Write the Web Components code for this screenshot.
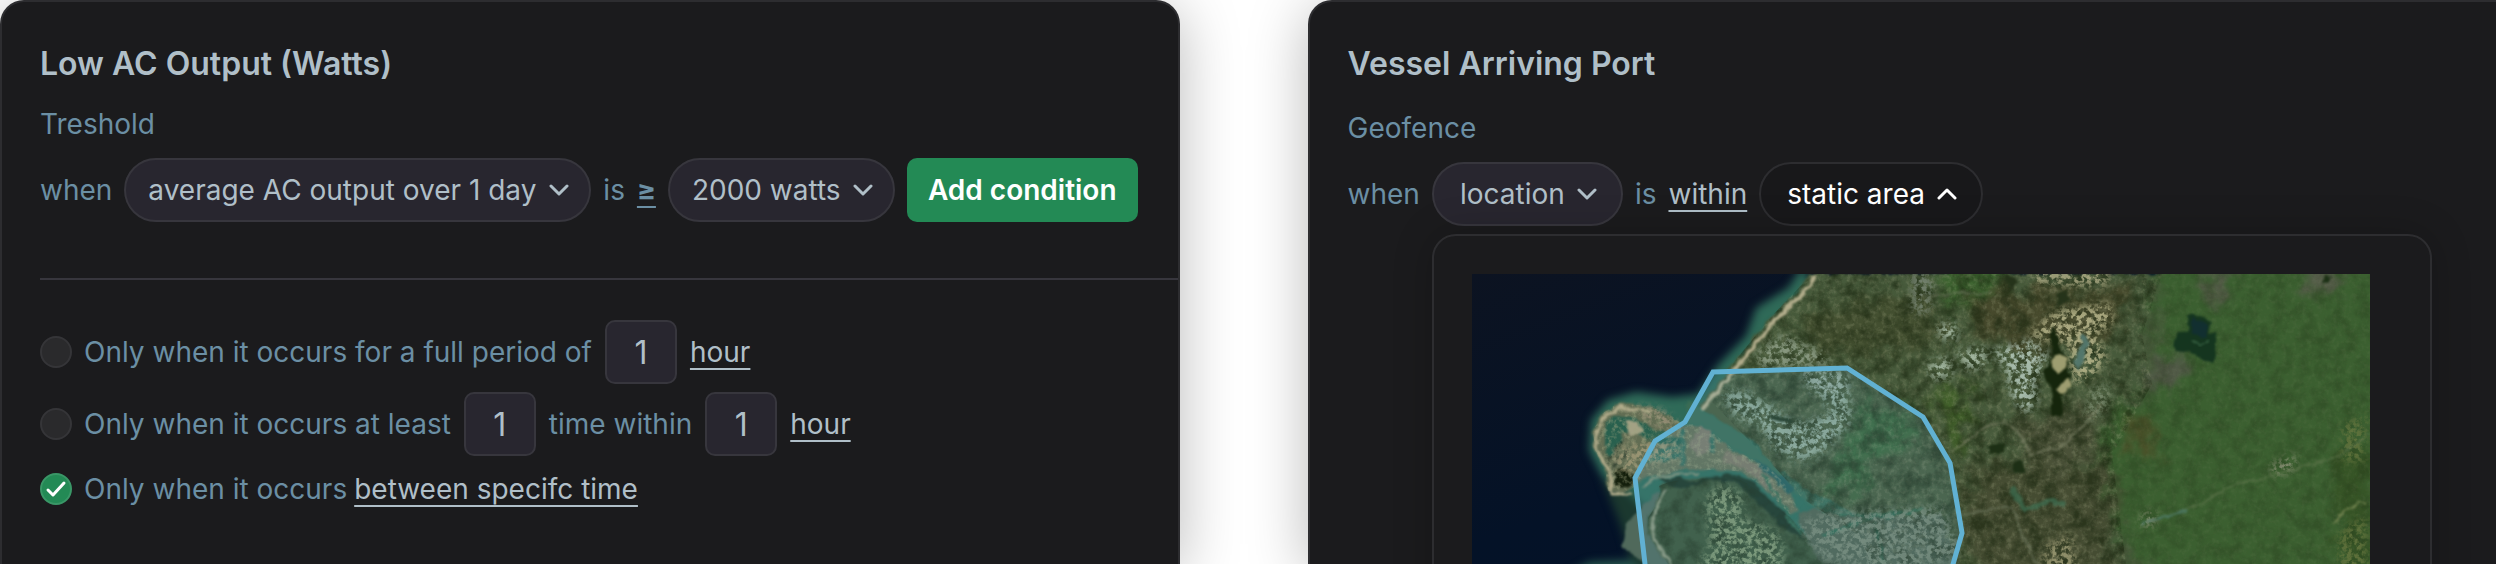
<!DOCTYPE html>
<html lang="en">
<head>
<meta charset="utf-8">
<meta name="viewport" content="width=device-width, initial-scale=1">
<title>Alert rules</title>
<style>
  :root {
    --surface: #1b1b1d;
    --surface-edge: #2d2d30;
    --field: #28262f;
    --field-edge: #37363d;
    --text: #b0bfc8;
    --text-muted: #6b8fa4;
    --accent: #238a55;
  }
  body {
    margin: 0;
    background: #fff;
    color: var(--text-muted);
    font: 28px/40px Inter, "Liberation Sans", sans-serif;
  }
  main {
    display: flex;
    gap: 128px;
    height: 100vh;
    overflow: hidden;
  }
  /* the second card runs on past the edge of the window */
  main rule-card:last-child {
    flex: 1;
    margin-right: -24px;
  }
</style>
</head>
<body>
<main>
  <rule-card heading="Low AC Output (Watts)" kind="Treshold">
    <condition-row>
      <span slot="lead">when</span>
      <pill-select label="Metric" value="average AC output over 1 day"></pill-select>
      <span>is</span>
      <inline-link tone="muted">≥</inline-link>
      <pill-select label="Value" value="2000 watts"></pill-select>
      <action-button>Add condition</action-button>
    </condition-row>
    <rule-divider></rule-divider>
    <occurrence-list></occurrence-list>
  </rule-card>
  <rule-card heading="Vessel Arriving Port" kind="Geofence" roomy>
    <condition-row>
      <span slot="lead">when</span>
      <pill-select label="Property" value="location" wide></pill-select>
      <span>is</span>
      <inline-link>within</inline-link>
      <pill-toggle>static area</pill-toggle>
      <map-popover slot="panel"><geofence-map></geofence-map></map-popover>
    </condition-row>
  </rule-card>
</main>

<script>
class RuleCard extends HTMLElement {
  constructor() {
    super();
    this.attachShadow({ mode: "open" });
  }

  connectedCallback() {
    this.shadowRoot.innerHTML = `
      <style>
        :host {
          display: block;
          box-sizing: border-box;
          padding: 42px 40px 0 38px;
          background: var(--surface);
          border: 2px solid var(--surface-edge);
          border-bottom: 0;
          border-radius: 24px 24px 0 0;
          box-shadow: 0 8px 60px rgba(0, 0, 0, 0.28);
        }
        h2 {
          margin: 0 0 20px;
          color: var(--text);
          font-size: 32px;
          font-weight: 600;
          line-height: 40px;
        }
        p { margin: 0 0 14px; }
        :host([roomy]) h2 { margin-bottom: 24px; }
      </style>
      <h2>${this.getAttribute("heading")}</h2>
      <p>${this.getAttribute("kind")}</p>
      <slot></slot>
    `;
  }
}

class ConditionRow extends HTMLElement {
  constructor() {
    super();
    this.attachShadow({ mode: "open" });
    this.shadowRoot.innerHTML = `
      <style>
        :host {
          display: grid;
          grid-template-columns: max-content 1fr;
          column-gap: 12px;
          align-items: center;
          white-space: nowrap;
        }
        .parts {
          display: flex;
          align-items: center;
          gap: 12px;
        }
        slot[name="panel"] {
          display: block;
          grid-column: 2;
        }
      </style>
      <slot name="lead"></slot>
      <div class="parts"><slot></slot></div>
      <slot name="panel"></slot>
    `;
  }
}

class PillSelect extends HTMLElement {
  constructor() {
    super();
    this.attachShadow({ mode: "open" });
  }

  connectedCallback() {
    const value = this.getAttribute("value");
    this.shadowRoot.innerHTML = `
      <style>
        :host {
          display: grid;
          align-items: center;
          --pad: 22px;
        }
        :host([wide]) { --pad: 26px; }
        select, svg { grid-area: 1 / 1; }
        select {
          appearance: none;
          box-sizing: border-box;
          height: 64px;
          margin: 0;
          padding: 0 calc(var(--pad) + 30px) 0 var(--pad);
          color: var(--text);
          background: var(--field);
          border: 2px solid var(--field-edge);
          border-radius: 32px;
          font: inherit;
        }
        svg {
          justify-self: end;
          width: 20px;
          height: 12px;
          margin-right: var(--pad);
          fill: none;
          stroke: var(--text);
          stroke-width: 3;
          pointer-events: none;
        }
      </style>
      <select aria-label="${this.getAttribute("label")}"><option>${value}</option></select>
      <svg viewBox="0 0 20 12"><path d="M2 2l8 8 8-8" stroke-linecap="round" stroke-linejoin="round"/></svg>
    `;
  }
}

class PillToggle extends HTMLElement {
  constructor() {
    super();
    this.attachShadow({ mode: "open" });
    this.shadowRoot.innerHTML = `
      <style>
        :host { display: block; }
        button {
          display: flex;
          align-items: center;
          gap: 12px;
          box-sizing: border-box;
          height: 64px;
          padding: 0 24px 0 26px;
          color: #fff;
          background: #18181a;
          border: 2px solid var(--surface-edge);
          border-radius: 32px;
          font: inherit;
        }
        svg { width: 20px; height: 12px; fill: none; stroke: #fff; stroke-width: 3; }
      </style>
      <button type="button" aria-expanded="true">
        <slot></slot>
        <svg viewBox="0 0 20 12"><path d="M2 10l8-8 8 8" stroke-linecap="round" stroke-linejoin="round"/></svg>
      </button>
    `;
  }
}

class InlineLink extends HTMLElement {
  constructor() {
    super();
    this.attachShadow({ mode: "open" });
    this.shadowRoot.innerHTML = `
      <style>
        :host { display: inline; }
        a {
          color: var(--text);
          text-decoration: underline 2px;
          text-underline-offset: 6px;
          text-decoration-skip-ink: none;
        }
        :host([tone="muted"]) a {
          color: var(--text-muted);
          font-weight: 700;
        }
      </style>
      <a href="#"><slot></slot></a>
    `;
  }
}

class ActionButton extends HTMLElement {
  constructor() {
    super();
    this.attachShadow({ mode: "open" });
    this.shadowRoot.innerHTML = `
      <style>
        :host { display: block; }
        button {
          height: 64px;
          padding: 0 21px;
          color: #fff;
          background: var(--accent);
          border: 0;
          border-radius: 10px;
          font: inherit;
          font-weight: 600;
        }
      </style>
      <button type="button"><slot></slot></button>
    `;
  }
}

class RuleDivider extends HTMLElement {
  constructor() {
    super();
    this.attachShadow({ mode: "open" });
    this.shadowRoot.innerHTML = `
      <style>
        :host {
          display: block;
          margin: 56px -40px 40px 0;
        }
        hr {
          margin: 0;
          border: 0;
          border-top: 2px solid var(--field-edge);
        }
      </style>
      <hr>
    `;
  }
}

class OccurrenceList extends HTMLElement {
  constructor() {
    super();
    this.attachShadow({ mode: "open" });
    this.shadowRoot.innerHTML = `
      <style>
        :host {
          display: flex;
          flex-direction: column;
          gap: 8px;
          white-space: nowrap;
        }
        .row {
          display: flex;
          align-items: center;
          gap: 13px;
          min-height: 50px;
        }
        .choice {
          display: grid;
          grid-template-columns: 32px max-content;
          align-items: center;
          column-gap: 12px;
        }
        .choice svg {
          grid-area: 1 / 1;
          width: 32px;
          height: 32px;
          fill: none;
          stroke: #fff;
          stroke-width: 3;
          pointer-events: none;
        }
        input[type="radio"] {
          grid-area: 1 / 1;
          appearance: none;
          box-sizing: border-box;
          width: 32px;
          height: 32px;
          margin: 0;
          background: #2a2a2c;
          border: 2px solid #353538;
          border-radius: 50%;
        }
        input[type="radio"]:checked {
          background: var(--accent);
          border-color: #3a9767;
        }
        input[type="text"] {
          box-sizing: border-box;
          width: 72px;
          height: 64px;
          padding: 0;
          color: var(--text);
          background: var(--field);
          border: 2px solid var(--field-edge);
          border-radius: 10px;
          font: inherit;
          font-size: 32px;
          text-align: center;
        }
        .tight { gap: 7px; }
      </style>
      <div class="row">
        <div class="choice">
          <input type="radio" name="when" id="full">
          <label for="full">Only when it occurs for a full period of</label>
        </div>
        <input type="text" inputmode="numeric" aria-label="Period" value="1">
        <inline-link>hour</inline-link>
      </div>
      <div class="row">
        <div class="choice">
          <input type="radio" name="when" id="least">
          <label for="least">Only when it occurs at least</label>
        </div>
        <input type="text" inputmode="numeric" aria-label="Times" value="1">
        <span>time within</span>
        <input type="text" inputmode="numeric" aria-label="Window" value="1">
        <inline-link>hour</inline-link>
      </div>
      <div class="row tight">
        <div class="choice">
          <input type="radio" name="when" id="between" checked>
          <svg viewBox="0 0 32 32"><path d="M8 17l5 5 11-12" stroke-linecap="round" stroke-linejoin="round"/></svg>
          <label for="between">Only when it occurs</label>
        </div>
        <inline-link>between specifc time</inline-link>
      </div>
    `;
  }
}

class MapPopover extends HTMLElement {
  constructor() {
    super();
    this.attachShadow({ mode: "open" });
    this.shadowRoot.innerHTML = `
      <style>
        :host {
          display: block;
          margin: 8px 46px 0 0;
          padding: 38px 60px 38px 38px;
          border: 2px solid var(--surface-edge);
          border-radius: 24px;
          background: var(--surface);
          box-shadow: 0 0 40px rgba(0, 0, 0, 0.2);
        }
      </style>
      <slot></slot>
    `;
  }
}

class GeofenceMap extends HTMLElement {
  constructor() {
    super();
    this.attachShadow({ mode: "open" });
    this.shadowRoot.innerHTML = `
      <style>
        :host { display: block; }
        svg { display: block; width: 100%; height: auto; }
        filter { color-interpolation-filters: sRGB; }
      </style>
      <svg viewBox="0 0 898 340" role="img" aria-label="Satellite map with the geofence area">
        <defs>
          <linearGradient id="sea" x1="0" y1="0" x2="1" y2="1">
            <stop offset="0" stop-color="#0c1321"/>
            <stop offset=".4" stop-color="#041227"/>
            <stop offset="1" stop-color="#02122b"/>
          </linearGradient>
          <filter id="haze" x="-20%" y="-20%" width="140%" height="140%"><feGaussianBlur stdDeviation="4"/></filter>
          <!-- ragged edges -->
          <filter id="rough" x="-10%" y="-10%" width="120%" height="120%">
            <feTurbulence type="fractalNoise" baseFrequency=".09" numOctaves="3" seed="4"/>
            <feDisplacementMap in="SourceGraphic" scale="8" xChannelSelector="R" yChannelSelector="G"/>
            <feGaussianBlur stdDeviation="1"/>
          </filter>
          <filter id="patch" x="-20%" y="-20%" width="140%" height="140%">
            <feGaussianBlur stdDeviation="6" result="b"/>
            <feTurbulence type="fractalNoise" baseFrequency=".05" numOctaves="5" seed="9"/>
            <feDisplacementMap in="b" scale="40" xChannelSelector="R" yChannelSelector="G"/>
            <feGaussianBlur stdDeviation="1"/>
          </filter>
          <!-- roofs and greenhouses -->
          <filter id="speckle" x="-10%" y="-10%" width="120%" height="120%">
            <feGaussianBlur in="SourceGraphic" stdDeviation="4" result="b"/>
            <feTurbulence type="fractalNoise" baseFrequency=".2" numOctaves="3" seed="21"/>
            <feColorMatrix values="0 0 0 0 1  0 0 0 0 1  0 0 0 0 1  0 5 0 0 -2.1" result="n"/>
            <feComposite in="b" in2="n" operator="in"/>
            <feGaussianBlur stdDeviation=".7"/>
          </filter>
          <!-- ground texture -->
          <filter id="light" x="0" y="0" width="100%" height="100%">
            <feTurbulence type="fractalNoise" baseFrequency=".2" numOctaves="3" seed="3"/>
            <feColorMatrix values="0 0 0 0 .62  0 0 0 0 .64  0 0 0 0 .5  3 0 0 0 -1.35"/>
            <feGaussianBlur stdDeviation=".7" result="n"/>
            <feComposite in="n" in2="SourceGraphic" operator="in"/>
          </filter>
          <filter id="dark" x="0" y="0" width="100%" height="100%">
            <feTurbulence type="fractalNoise" baseFrequency=".07" numOctaves="5" seed="12"/>
            <feColorMatrix values="0 0 0 0 .1  0 0 0 0 .15  0 0 0 0 .06  2.6 0 0 0 -1"/>
            <feGaussianBlur stdDeviation=".6" result="n"/>
            <feComposite in="n" in2="SourceGraphic" operator="in"/>
          </filter>
          <path id="mainland" d="M339 0L327 17 298 44 285 60 262 88 240 118 227 133 251 149 281 166 298 189 331 213 358 229 385 241 430 340 898 340 898 0z"/>
          <path id="south" d="M176 244C184 232 190 220 187 212 205 203 235 205 262 204 285 210 300 232 318 243 333 260 345 280 372 290L440 294 440 340 220 340 196 290 175 260z"/>
          <path id="spit" d="M212 151L196 140 178 133 157 130 143 131 131 139 121 156 123 176 133 194 136 217 150 219 163 213 168 205 190 203 212 194 240 196 268 197 290 212 318 240 326 236 316 213 296 193 262 176 240 158 222 150z"/>
        </defs>

        <rect width="898" height="340" fill="url(#sea)"/>

        <!-- shallows -->
        <g filter="url(#haze)">
          <path d="M331 -8L316 14 284 34 274 62 245 92 226 120 200 123 164 118 136 126 119 146 117 176 130 202 150 220 172 240 166 300 240 340 430 340 380 100z" fill="#2f6a58"/>
          <path d="M130 205L152 214 178 240 180 300 160 290 148 250z" fill="#1b382f"/>
          <path d="M95 300L118 288 160 286 190 340 90 340z" fill="#29584e"/>
        </g>
        <path d="M185 216L170 235 153 250 150 272 166 284 190 300 200 290 178 262 176 244 190 226z" fill="#50695b" filter="url(#rough)"/>

        <g filter="url(#rough)">
          <use href="#spit" fill="#626d53"/>
          <path d="M133 150L145 140 160 143 187 157 211 163 208 171 186 170 163 160 150 158 147 173 138 183 133 176z" fill="#28604e"/>
          <path d="M152 148L164 146 170 158 160 164z" fill="#a3a184"/>
          <path d="M135 190L149 168M141 192L158 174" stroke="#28382a" stroke-width="2"/>
          <path d="M211 155v37M240 158v20M176 180l34-6M176 186l32-4" stroke="#346a58" stroke-width="5" fill="none"/>
          <path d="M228 152l10 4v20l-12 8-8-14z" fill="#7b7766"/>
          <path d="M254 176l16 6 20 12 16 24-12-4-24-20-20-6z" fill="#7a7562"/>
          <path d="M142 198Q152 192 162 202L160 212 142 212z" fill="#141f0c"/>
          <use href="#south" fill="#3c5437"/>
          <path d="M186 205L206 202 222 208 255 199 276 205 300 226 322 248 332 266 318 260 290 234 266 210 240 206 205 216z" fill="#1e3524"/>
        </g>

        <use href="#mainland" fill="#475a3b" filter="url(#rough)"/>

        <!-- fields -->
        <g filter="url(#patch)">
          <path d="M690 -20L940 -20 940 370 700 370 650 250 620 210 640 130 700 110 680 60z" fill="#3b5f30"/>
          <path d="M466 -20L540 -20 530 24 490 38 470 28z" fill="#3d6430"/>
          <path d="M460 120L494 108 500 150 478 180z" fill="#42602b"/>
          <path d="M390 120L440 140 450 168 410 182 384 220 350 230 370 180z" fill="#3c663a"/>
          <path d="M500 20L660 10 650 60 560 80 500 60z" fill="#46492c"/>
          <path d="M500 190L640 190 640 300 520 330 490 260z" fill="#454c32"/>
          <path d="M540 150L620 130 630 180 560 200z" fill="#4a5138"/>
          <path d="M736 -10L760 -10 750 30 734 26zM830 -4L874 -4 856 22 826 16z" fill="#555c49"/>
          <path d="M684 90L718 82 718 102 690 118 672 108z" fill="#525a48"/>
          <path d="M655 140L680 145 685 190 660 180z" fill="#495129"/>
          <path d="M860 180L900 170 900 340 870 340z" fill="#365426"/>
          <path d="M330 40L450 20 480 60 430 80 340 80z" fill="#434f30"/>
        </g>

        <!-- waterways -->
        <g filter="url(#rough)">
          <path d="M216 127L240 142 272 160 300 190 340 219 380 238 430 240 400 250 352 240 318 216 296 196 262 174 230 152 214 148z" fill="#3b6b54"/>
          <path d="M280 184L308 200 322 214 316 218 296 202z" fill="#275c58"/>
          <path d="M324 240Q350 226 400 245L470 240 500 340 420 340 345 285z" fill="#4f604d"/>
          <path d="M352 236L400 243 452 236M350 263L400 244M403 250L412 290M290 200L330 262" stroke="#336a50" stroke-width="3" fill="none"/>
        </g>

        <g>
          <path d="M340 0L560 0 690 0 670 60 680 110 640 180 660 340 430 340 385 260 331 225 300 190 240 128 262 88 298 44z" filter="url(#light)" opacity=".26"/>
          <path d="M340 0L560 0 690 0 670 60 680 110 640 180 660 340 430 340 385 260 331 225 300 190 240 128 262 88 298 44z" filter="url(#dark)" opacity=".6"/>
          <path d="M670 0L898 0 898 340 650 340 630 180 670 110z" filter="url(#dark)" opacity=".22"/>
          <path d="M670 0L898 0 898 340 650 340 630 180 670 110z" filter="url(#light)" opacity=".07"/>
          <use href="#spit" filter="url(#light)" opacity=".5"/>
          <use href="#south" filter="url(#dark)" opacity=".5"/>
        </g>

        <!-- built-up ground -->
        <g filter="url(#speckle)" opacity=".8">
          <path d="M282 82L308 60 345 74 362 90 290 94z" fill="#93a38c"/>
          <path d="M250 118L270 116 300 132 322 150 360 140 340 110 376 98 378 130 380 146 352 178 330 188 304 176 288 152 262 142z" fill="#a3bcab"/>
          <path d="M330 96L375 98 366 122 336 116z" fill="#a9bdb1"/>
          <path d="M224 300L238 270 234 222 250 210 270 220 270 244 306 258 312 280 296 340 214 330z" fill="#8fa47a"/>
          <path d="M326 250L352 240 470 232 490 280 430 300 350 286z" fill="#7f8c77"/>
          <path d="M140 178L170 166 206 168 208 184 170 194 150 200z" fill="#a29a78"/>
          <path d="M160 132L190 136 206 150 200 156 176 146z" fill="#a69880"/>
          <path d="M438 -4L462 0 458 40 440 40z" fill="#7c8978"/>
          <path d="M464 50L484 48 486 68 470 66zM454 90L476 82 482 102 460 106zM484 78L512 72 516 90 496 98z" fill="#b4c8b4"/>
          <path d="M520 76L560 66 576 80 562 112 566 126 554 140 540 124 534 96z" fill="#bdd2c6"/>
          <path d="M560 -6L640 -6 632 14 560 10z" fill="#b5b28b"/>
          <path d="M572 46L590 34 640 30 640 52 624 60 636 84 620 104 600 110 596 70 574 66 556 62z" fill="#c2bf93"/>
          <path d="M618 114L640 110 634 136 612 150z" fill="#7d8e72"/>
          <path d="M572 272L600 260 606 300 570 320z" fill="#a3a079"/>
          <path d="M798 192L824 180 822 196 802 202zM670 240L684 238 682 252 668 252z" fill="#9a9b84"/>
          <path d="M870 150L896 140 890 190 870 186zM866 260L894 240 896 320 868 322z" fill="#66763f"/>
        </g>

        <!-- lakes and woods -->
        <g filter="url(#rough)">
          <path d="M716 41L728 40 738 48 736 60 744 58 744 76 740 87 730 86 722 80 706 77 703 72 706 58 716 60z" fill="#15351f"/>
          <path d="M720 42L736 50 734 64 720 62z" fill="#122f30"/>
          <path d="M582 52L590 78 600 104 588 124 593 136 589 143 578 140 582 122 572 98 580 86 578 62z" fill="#15250c"/>
          <path d="M584 18L596 16 598 28 586 32zM534 0L546 8 540 14 532 8z" fill="#25331a"/>
          <path d="M540 188L552 188 553 198 542 199zM516 174L534 168 532 178 520 180z" fill="#1d2f15"/>
          <path d="M854 0L862 2 858 8 852 8z" fill="#1c3015"/>
          <path d="M298 140L320 146 318 150 300 146z" fill="#22361f"/>
        </g>
        <path d="M581 84q6-6 12 0l1 10-8 6-6-6zM586 112l10-6 4 6-10 8z" fill="#9d9d70" filter="url(#rough)"/>
        <path d="M720 66l8 6 8-5" fill="none" stroke="#416d4c" stroke-width="1" filter="url(#rough)"/>
        <path d="M612 60L602 88 608 96 618 70z" fill="#53766b" filter="url(#rough)"/>

        <!-- roads and small rivers -->
        <g fill="none" stroke-width="2" filter="url(#rough)" opacity=".7">
          <path d="M480 176L506 158Q540 134 558 180L586 174 608 156 630 130" stroke="#7d8267"/>
          <path d="M540 214L552 236 576 228 592 230" stroke="#3f7154" stroke-width="5"/>
          <path d="M668 250L718 234 764 210 806 200 868 182 896 160" stroke="#5c744a"/>
          <path d="M668 250L716 236" stroke="#507c6c" stroke-width="3"/>
          <path d="M860 250L888 226 896 228" stroke="#82905a"/>
          <path d="M490 240L540 232 560 280 566 290M450 22L520 18" stroke="#6a735a"/>
        </g>

        <!-- beaches -->
        <g fill="none" stroke="#b1ac8b" stroke-linejoin="round" filter="url(#rough)">
          <path d="M343 2L331 20 302 47 288 64 265 92 243 120 230 136" stroke-width="4"/>
          <path d="M180 138L147 133 133 142 124 160 126 179 137 198 140 220 158 220" stroke-width="3"/>
          <path d="M194 216L180 244 180 262 202 296" stroke-width="3" stroke="#8e977c"/>
          <path d="M170 212Q200 196 225 200" stroke-width="2" stroke="#8a9076"/>
        </g>

        <path d="M173 290L163 204 183 167 213 148 241 98 375 94 451 143 478 189 490 259 481 290 470 340 179 340z"
          fill="#62b4d6" fill-opacity=".14" stroke="#61b1d3" stroke-width="5"/>
      </svg>
    `;
  }
}

customElements.define("rule-card", RuleCard);
customElements.define("condition-row", ConditionRow);
customElements.define("pill-select", PillSelect);
customElements.define("pill-toggle", PillToggle);
customElements.define("inline-link", InlineLink);
customElements.define("action-button", ActionButton);
customElements.define("rule-divider", RuleDivider);
customElements.define("occurrence-list", OccurrenceList);
customElements.define("map-popover", MapPopover);
customElements.define("geofence-map", GeofenceMap);
</script>
</body>
</html>
